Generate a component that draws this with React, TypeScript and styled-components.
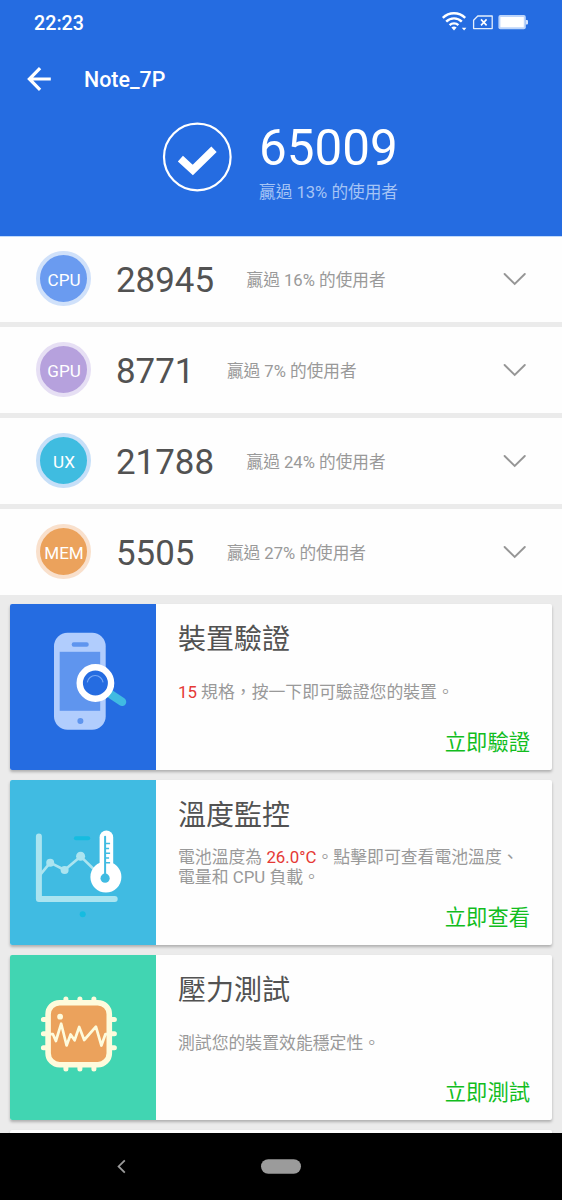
import React from 'react';
import styled, { createGlobalStyle } from 'styled-components';

const GlobalStyle = createGlobalStyle`
  * { box-sizing: border-box; }
  html, body { margin: 0; padding: 0; }
  body {
    width: 562px;
    height: 1200px;
    overflow: hidden;
    background: #ebebeb;
    font-family: Roboto, "Noto Sans CJK TC", sans-serif;
  }
`;

const Screen = styled.div`
  width: 562px;
  height: 1200px;
  display: flex;
  flex-direction: column;
  overflow: hidden;
  background: #ebebeb;
`;

const Header = styled.header`
  height: 237px;
  flex: none;
  background: #256ce1;
  border-bottom: 1px solid #c0dafb;
  color: #fff;
`;

const StatusBar = styled.div`
  height: 46px;
  display: flex;
  align-items: center;
  justify-content: space-between;
  padding: 0 34px 0 34px;
`;

const Clock = styled.span`
  margin-top: 2px;
  font-size: 19.7px;
  font-weight: 500;
  line-height: 24px;
`;

const StatusIcons = styled.svg`
  display: block;
  width: 88px;
  height: 24px;
`;

const AppBar = styled.div`
  height: 66px;
  display: flex;
  align-items: center;
  padding-left: 27px;
`;

const BackIcon = styled.svg`
  display: block;
  width: 24px;
  height: 24px;
  margin: -1px 33px 0 0;
`;

const AppTitle = styled.h1`
  margin: 2px 0 0;
  font-size: 21.4px;
  font-weight: 500;
  line-height: 26px;
`;

const Hero = styled.div`
  display: flex;
  align-items: flex-start;
  padding: 10px 0 0 162px;
`;

const HeroCheck = styled.svg`
  display: block;
  width: 70px;
  height: 70px;
  margin-right: 27px;
`;

const HeroText = styled.div`
  display: flex;
  flex-direction: column;
`;

const TotalScore = styled.div`
  margin-top: 1px;
  font-size: 49.4px;
  line-height: 50px;
`;

const TotalNote = styled.div`
  margin-top: 9px;
  font-size: 16.65px;
  line-height: 22px;
  color: #a5c4f5;
`;

const ScoreList = styled.section`
  display: flex;
  flex-direction: column;
  gap: 5px;
  flex: none;
`;

const ScoreRow = styled.div`
  height: 86px;
  display: flex;
  align-items: center;
  padding: 0 36px 1px 36px;
  background: #fefefe;

  &:first-child {
    height: 85px;
    padding-bottom: 2px;
  }
`;

const Badge = styled.div<{ $fill: string; $ring: string }>`
  width: 55px;
  height: 55px;
  flex: none;
  display: flex;
  align-items: center;
  justify-content: center;
  border: 4px solid ${(p) => p.$ring};
  border-radius: 50%;
  background: ${(p) => p.$fill};
  color: #fff;
  font-size: 17.1px;
  line-height: 20px;
  padding: 3px 0 0 1px;
`;

const Score = styled.div`
  margin: 4px 0 0 25px;
  font-size: 34.9px;
  line-height: 40px;
  color: #525252;
`;

const ScoreNote = styled.div`
  margin: 5px 0 0 32.5px;
  flex: 1;
  font-size: 16.65px;
  line-height: 22px;
  color: #999;
`;

const Chevron = styled.svg`
  display: block;
  width: 23px;
  height: 14px;
`;

const Cards = styled.section`
  flex: 1;
  min-height: 0;
  overflow: hidden;
  display: flex;
  flex-direction: column;
  gap: 9.9px;
  padding: 9.4px 10px 0 10.3px;
`;

const Card = styled.article`
  height: 165.4px;
  flex: none;
  display: flex;
  overflow: hidden;
  border-radius: 2px;
  background: #fefefe;
  box-shadow: 0 2px 3px rgba(0, 0, 0, 0.26);
`;

const CardArt = styled.div<{ $color: string }>`
  width: 146px;
  flex: none;
  background: ${(p) => p.$color};
`;

const ArtSvg = styled.svg`
  display: block;
  width: 146px;
  height: 165px;
`;

const CardBody = styled.div`
  flex: 1;
  display: flex;
  flex-direction: column;
  padding: 19px 22px 13px 21.7px;
`;

const CardTitle = styled.h2`
  margin: 0;
  font-size: 28px;
  font-weight: 400;
  line-height: 34px;
  color: #525252;
`;

const CardText = styled.div`
  flex: 1;
  display: flex;
  align-items: center;
  padding-bottom: 2px;
`;

const CardParagraph = styled.p`
  margin: 0;
  font-size: 16.85px;
  line-height: 20px;
  color: #999;
  white-space: nowrap;
`;

const Highlight = styled.span`
  color: #e53935;
`;

const CardAction = styled.div`
  align-self: flex-end;
  font-size: 21.3px;
  line-height: 28px;
  color: #12bd1e;
`;

const NavBar = styled.nav`
  height: 67.5px;
  flex: none;
  background: #000;
`;

const NavSvg = styled.svg`
  display: block;
  width: 562px;
  height: 67px;
`;

const scores = [
  { label: 'CPU', score: '28945', percent: 16, fill: '#6a9bf0', ring: '#d0e1fa' },
  { label: 'GPU', score: '8771', percent: 7, fill: '#b6a1dd', ring: '#e6dff4' },
  { label: 'UX', score: '21788', percent: 24, fill: '#3fbce0', ring: '#c6dff8' },
  { label: 'MEM', score: '5505', percent: 27, fill: '#eba25c', ring: '#f9e0cc' },
];

function PhoneArt() {
  return (
    <ArtSvg viewBox="10.3 604.2 146 165">
      <rect x="54.3" y="633" width="51.7" height="97" rx="13.5" fill="#b1cdfd" />
      <rect x="72" y="642.5" width="17" height="4.5" rx="2" fill="#5f95ee" />
      <rect x="60" y="652" width="40.5" height="59" fill="#5f95ee" />
      <circle cx="80.7" cy="721.2" r="3" fill="#5f95ee" />
      <path d="M111 694.5L122.3 702" stroke="#40bbe2" strokeWidth="8.5" strokeLinecap="round" />
      <circle cx="95.7" cy="683.2" r="15.7" fill="#256ce1" stroke="#fff" strokeWidth="6.4" />
      <path d="M87.6 682.5a8 8 0 0 1 15.8 0" fill="none" stroke="#78a9f5" strokeWidth="1.1" />
    </ArtSvg>
  );
}

function TemperatureArt() {
  return (
    <ArtSvg viewBox="10.1 779.8 146 165">
      <g fill="none" stroke="#abe4f0" strokeLinecap="round" strokeLinejoin="round">
        <path d="M39 836.2V898.7H114.8" strokeWidth="6" />
        <path d="M40 875L50.3 862.5L64.7 869.8L80.7 856.2L95 870" strokeWidth="2.6" />
      </g>
      <g fill="#abe4f0">
        <circle cx="50.3" cy="862.5" r="4" />
        <circle cx="64.7" cy="869.8" r="4" />
        <circle cx="80.7" cy="856" r="4.5" />
      </g>
      <rect x="74" y="836" width="16.3" height="4" rx="2" fill="#15bce0" />
      <circle cx="82.8" cy="914" r="3" fill="#15bce0" />
      <rect x="99.7" y="830.3" width="13.6" height="44" rx="6.8" fill="#fff" />
      <circle cx="106" cy="876.8" r="15.5" fill="#fff" />
      <circle cx="105.2" cy="878" r="4.6" fill="#40bbe2" />
      <path d="M105.2 878V836.5" stroke="#40bbe2" strokeWidth="2" strokeLinecap="round" />
      <path
        d="M106 843.3h4.2M106 848.3h3.2M106 853h4.2M106 857.8h3.2M106 862.5h4.2"
        stroke="#40bbe2"
        strokeWidth="1.4"
      />
    </ArtSvg>
  );
}

function ChipArt() {
  return (
    <ArtSvg viewBox="10.1 955 146 165">
      <path
        d="M66 999v5M80 999v5M94 999v5M66 1064v5M80 1064v5M94 1064v5M43.5 1019.5h5M43.5 1033.7h5M43.5 1047.8h5M109.5 1019.5h5M109.5 1033.7h5M109.5 1047.8h5"
        stroke="#fefbdc"
        strokeWidth="5"
        strokeLinecap="round"
      />
      <rect x="48.2" y="1002.7" width="61.2" height="62" rx="11.5" fill="#eba25c" stroke="#fefbdc" strokeWidth="5.6" />
      <circle cx="60.2" cy="1016.7" r="2.9" fill="#fefbdc" />
      <path
        d="M50 1034.2h3L56 1041L61.3 1023.7L66.7 1045.5L70.7 1034.5L74.7 1040.3L79.3 1027L84.3 1040L96 1026.7L101.5 1045.5L105.5 1034.2h3"
        fill="none"
        stroke="#fefbdc"
        strokeWidth="2.7"
        strokeLinecap="round"
        strokeLinejoin="round"
      />
    </ArtSvg>
  );
}

export default function App() {
  return (
    <>
      <GlobalStyle />
      <Screen>
        <Header>
          <StatusBar>
            <Clock>22:23</Clock>
            <StatusIcons viewBox="440 11 88 24">
              <g fill="none" stroke="#fff" strokeWidth="2.4">
                <path d="M442.8 17.8a16 16 0 0 1 22.4 0" />
                <path d="M446.2 21.6a11 11 0 0 1 15.6 0" />
                <path d="M449.6 25.2a6.3 6.3 0 0 1 8.8 0" />
              </g>
              <path d="M451.4 27.6a4 4 0 0 1 5.2 0L454 30.6z" fill="#fff" />
              <path d="M461.8 27.7h4.6l-2.3 2.8z" fill="#fff" />
              <path d="M477.8 16h14.4v12.6h-18.6v-8.4z" fill="none" stroke="#e4eefc" strokeWidth="1.3" strokeLinejoin="round" />
              <path d="M481 19.4l5.6 6M486.6 19.4l-5.6 6" stroke="#fff" strokeWidth="1.6" />
              <rect x="498.4" y="15" width="27.4" height="14.2" rx="2" fill="#bdd5fa" />
              <rect x="500.4" y="17" width="23.4" height="10.2" rx="0.5" fill="#fff" />
              <path d="M525.8 20h1.2q1 0 1 1v2.4q0 1-1 1h-1.2z" fill="#d5e4fc" />
            </StatusIcons>
          </StatusBar>
          <AppBar>
            <BackIcon viewBox="0 0 24 24" fill="none" stroke="#fff" strokeWidth="3.2">
              <path d="M13.1 1.2L2.4 12L13.1 22.8M2.5 12H23.8" />
            </BackIcon>
            <AppTitle>Note_7P</AppTitle>
          </AppBar>
          <Hero>
            <HeroCheck viewBox="0 0 70 70" fill="none" stroke="#fff">
              <circle cx="35.3" cy="35" r="33.3" strokeWidth="2.2" />
              <path d="M18.4 36.6L30.8 48L52 27.2" strokeWidth="7.6" />
            </HeroCheck>
            <HeroText>
              <TotalScore>65009</TotalScore>
              <TotalNote>贏過 13% 的使用者</TotalNote>
            </HeroText>
          </Hero>
        </Header>
        <ScoreList>
          {scores.map((s) => (
            <ScoreRow key={s.label}>
              <Badge $fill={s.fill} $ring={s.ring}>{s.label}</Badge>
              <Score>{s.score}</Score>
              <ScoreNote>贏過 {s.percent}% 的使用者</ScoreNote>
              <Chevron viewBox="0 0 23 14" fill="none" stroke="#969696" strokeWidth="1.9" strokeLinecap="round">
                <path d="M1.6 2L11.7 12L21.8 2" />
              </Chevron>
            </ScoreRow>
          ))}
        </ScoreList>
        <Cards>
          <Card>
            <CardArt $color="#256ce1"><PhoneArt /></CardArt>
            <CardBody>
              <CardTitle>裝置驗證</CardTitle>
              <CardText>
                <CardParagraph><Highlight>15</Highlight> 規格，按一下即可驗證您的裝置。</CardParagraph>
              </CardText>
              <CardAction>立即驗證</CardAction>
            </CardBody>
          </Card>
          <Card>
            <CardArt $color="#40bbe2"><TemperatureArt /></CardArt>
            <CardBody>
              <CardTitle>溫度監控</CardTitle>
              <CardText>
                <CardParagraph>
                  電池溫度為 <Highlight>26.0°C</Highlight>。點擊即可查看電池溫度、
                  <br />
                  電量和 CPU 負載。
                </CardParagraph>
              </CardText>
              <CardAction>立即查看</CardAction>
            </CardBody>
          </Card>
          <Card>
            <CardArt $color="#41d5b2"><ChipArt /></CardArt>
            <CardBody>
              <CardTitle>壓力測試</CardTitle>
              <CardText>
                <CardParagraph>測試您的裝置效能穩定性。</CardParagraph>
              </CardText>
              <CardAction>立即測試</CardAction>
            </CardBody>
          </Card>
          <Card />
        </Cards>
        <NavBar>
          <NavSvg viewBox="0 1132.8 562 67" fill="none">
            <path d="M124.8 1160.2L118.6 1166.2L124.8 1172.4" stroke="#9b9b9b" strokeWidth="1.8" />
            <rect x="261" y="1159" width="40" height="14.6" rx="7.3" fill="#9b9b9b" />
          </NavSvg>
        </NavBar>
      </Screen>
    </>
  );
}
